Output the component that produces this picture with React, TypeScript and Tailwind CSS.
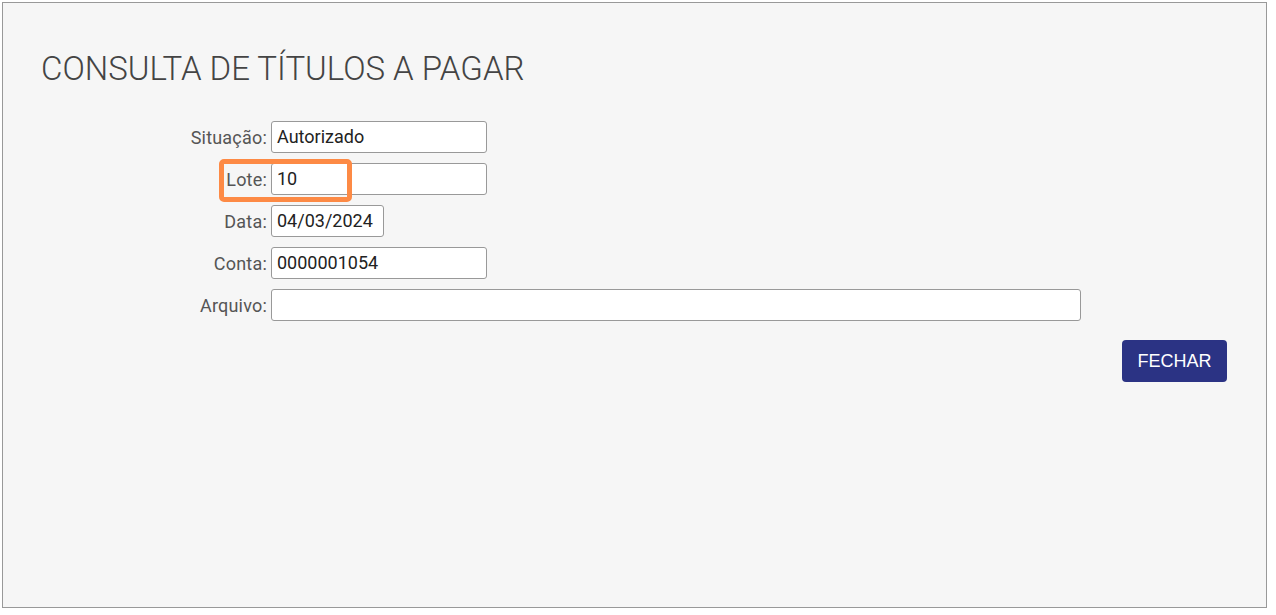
const fields = [
  { label: 'Situação:', value: 'Autorizado', width: 'w-[216px]' },
  { label: 'Lote:', value: '10', width: 'w-[216px]', highlight: true },
  { label: 'Data:', value: '04/03/2024', width: 'w-[113px]' },
  { label: 'Conta:', value: '0000001054', width: 'w-[216px]' },
  { label: 'Arquivo:', value: '', width: 'w-[810px]' },
];

export default function App() {
  return (
    <div className="h-[615px] w-full bg-white pt-[2px] pl-[2px] font-['Roboto',sans-serif]">
      <div className="relative h-[606px] w-[1265px] border border-[#999] bg-[#f6f6f6] pt-[46px]">
        <h1 className="pl-[38px] text-[33px] leading-[40px] font-light text-[#444]">
          CONSULTA DE TÍTULOS A PAGAR
        </h1>

        <div className="mt-[32px] flex flex-col gap-[10px]">
          {fields.map((f) => (
            <div key={f.label} className="relative flex items-center">
              <label className="w-[268px] pr-[4px] text-right text-[18px] tracking-[0.2px] text-[#555]">{f.label}</label>
              <div
                className={`h-[32px] ${f.width} rounded-[3px] border border-[#999] bg-white px-[5px] text-[18px] leading-[30px] text-[#222]`}
              >
                {f.value}
              </div>
              {f.highlight && (
                <div className="absolute left-[216px] top-[-4px] h-[43px] w-[133px] rounded-[5px] border-[5px] border-[#fd8a45]" />
              )}
            </div>
          ))}
        </div>

        <div className="mt-[19px] flex justify-end pr-[39px]">
          <button className="h-[42px] w-[105px] rounded-[4px] bg-[#2b3384] font-['Liberation_Sans',Arial,sans-serif] text-[18px] text-white">
            FECHAR
          </button>
        </div>
      </div>
    </div>
  );
}
